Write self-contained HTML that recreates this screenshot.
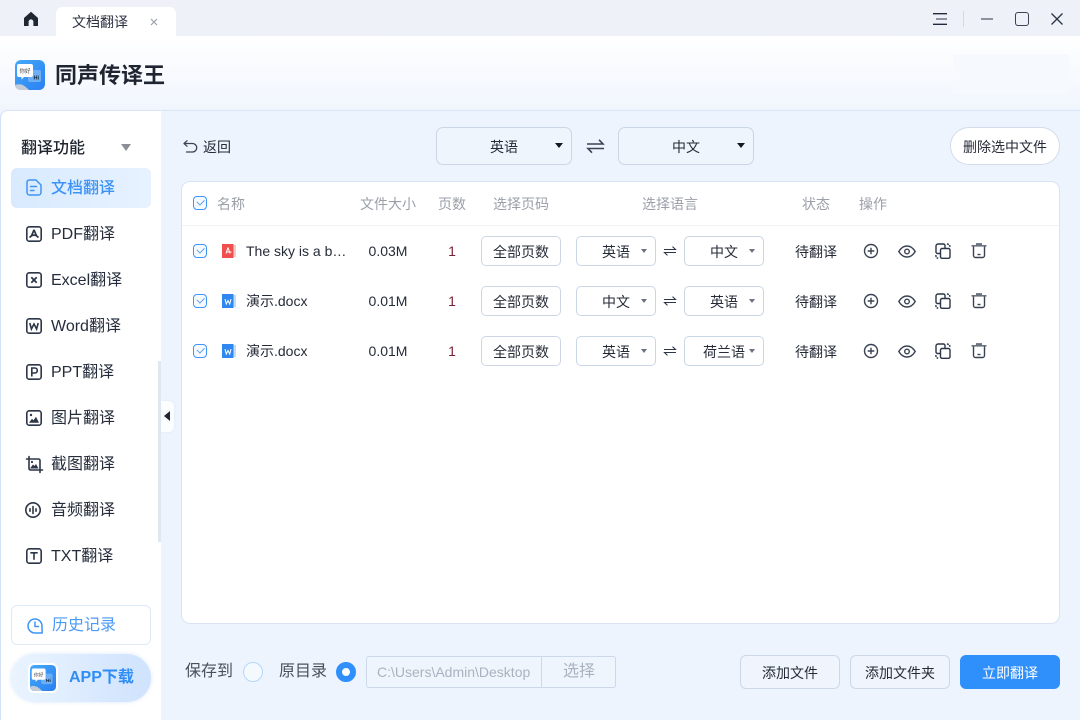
<!DOCTYPE html>
<html lang="zh-CN">
<head>
<meta charset="utf-8">
<title>同声传译王</title>
<style>
*{box-sizing:border-box;margin:0;padding:0}
html,body{width:1080px;height:720px;overflow:hidden;background:#edf4fd}
body{position:relative;font-family:"Liberation Sans","Noto Sans CJK SC",sans-serif;color:#1f2937;font-size:14px}
.a{position:absolute;white-space:nowrap}
.c{text-align:center}
svg{position:absolute;display:block;overflow:visible}
.side{font-size:16px;left:51px;line-height:24px;color:#252d3c}
.h{font-size:14px;color:#9a9fa8;line-height:20px;top:194px}
.t{font-size:14px;line-height:20px;color:#252b37}
.sel{position:absolute;border:1px solid #c9d6e6;border-radius:5px;background:#fff;width:80px;height:30px;font-size:14px;line-height:30px;color:#252b37}
.sel b{position:absolute;font-weight:normal;left:-1px;width:80px;text-align:center;top:0}
.sel i{position:absolute;right:8px;top:12px;width:0;height:0;border-left:3.5px solid transparent;border-right:3.5px solid transparent;border-top:4.5px solid #6b7280}
.pg{position:absolute;left:481px;width:80px;height:30px;border:1px solid #ccd6e4;border-radius:5px;background:#fff;text-align:center;font-size:14px;line-height:30px;color:#252b37}
.btn{position:absolute;top:655px;height:34px;border:1px solid #ccd8e8;border-radius:6px;background:#f0f5fd;text-align:center;font-size:14px;line-height:35px;color:#252b37}
.ic{fill:none;stroke:#2c3648;stroke-width:1.6;stroke-linecap:round;stroke-linejoin:round}
.cb{position:absolute;left:193px;width:14px;height:14px;border:1.5px solid #3f95f6;border-radius:4px;background:#f6faff}
.cb:after{content:"";position:absolute;left:2.5px;top:1.6px;width:6px;height:3.6px;border-left:1.2px solid #5e9fe6;border-bottom:1.2px solid #5e9fe6;transform:rotate(-45deg)}
</style>
</head>
<body>
<!-- title bar -->
<div class="a" style="left:0;top:0;width:1080px;height:36px;background:#eef1f7"></div>
<svg style="left:23px;top:11px" width="16" height="16" viewBox="0 0 16 16"><path fill="#1f2733" d="M8 .8 15 7v8h-4.6v-4.2a2.4 2.4 0 0 0-4.8 0V15H1V7z"/></svg>
<div class="a" style="left:56px;top:7px;width:120px;height:29px;background:#fff;border-radius:7px 7px 0 0"></div>
<div class="a" style="left:72px;top:12px;font-size:14px;line-height:20px;color:#2b3240">文档翻译</div>
<svg style="left:150px;top:18px" width="8" height="8" viewBox="0 0 8 8"><path d="M1 1l6 6M7 1 1 7" stroke="#9aa0aa" stroke-width="1.2"/></svg>
<svg style="left:933px;top:13px" width="14" height="12" viewBox="0 0 14 12"><path d="M0 .7h14M0 11.3h14" stroke="#1f2a3c" stroke-width="1.3"/><path d="M3 6h11" stroke="#8d94a0" stroke-width="2"/></svg>
<div class="a" style="left:963px;top:11px;width:1px;height:16px;background:#d5d9e0"></div>
<div class="a" style="left:981px;top:18px;width:12px;height:2px;background:#8c919b"></div>
<div class="a" style="left:1015px;top:12px;width:14px;height:14px;border:1.7px solid #3a4353;border-radius:3px"></div>
<svg style="left:1051px;top:13px" width="12" height="12" viewBox="0 0 12 12"><path d="M.5.5l11 11M11.500.5l-11 11" stroke="#2b3444" stroke-width="1.3"/></svg>

<!-- header -->
<div class="a" style="left:0;top:36px;width:1080px;height:76px;background:linear-gradient(#fff,#f0f5fd)"></div>
<div class="a" style="left:953px;top:54px;width:116px;height:40px;background:#f6fafe"></div>
<svg style="left:15px;top:60px" width="30" height="30" viewBox="0 0 30 30">
<defs><linearGradient id="lg" x1="0" y1="0" x2="1" y2="1"><stop offset="0" stop-color="#45a9f8"/><stop offset="1" stop-color="#2a80f2"/></linearGradient></defs>
<rect width="30" height="30" rx="6" fill="url(#lg)"/>
<path d="M0 25c6-2 9 0 14 5H5a5 5 0 0 1-5-5z" fill="#c3ccd6"/>
<rect x="13" y="10" width="13" height="12" rx="2" fill="#6eaef5"/>
<path d="M4 4h12a2 2 0 0 1 2 2v9a2 2 0 0 1-2 2H9l-2.500 2.500V17H4a2 2 0 0 1-2-2V6a2 2 0 0 1 2-2z" fill="#fff"/>
<text x="4.500" y="13" font-size="5.500" fill="#444" font-family="Noto Sans CJK SC">你好</text>
<text x="18.500" y="19.500" font-size="5.500" fill="#123" font-weight="bold" font-family="Liberation Sans">Hi</text>
</svg>
<div class="a" style="left:55px;top:59px;font-size:22px;line-height:33px;font-weight:700;color:#1e2430">同声传译王</div>

<!-- main bg / sidebar -->
<div class="a" style="left:0;top:110px;width:1080px;height:610px;background:#edf4fd;border-top:1px solid #d8e5f5;border-radius:8px 0 0 0"></div>
<div class="a" style="left:0;top:110px;width:161px;height:610px;background:#fff;border-top:1px solid #d8e5f5;border-left:1px solid #d3e2f6;border-radius:8px 0 0 0"></div>

<div class="a" style="left:21px;top:137px;font-size:16px;line-height:24px;font-weight:500;color:#1f2530">翻译功能</div>
<div class="a" style="left:121px;top:144px;width:0;height:0;border-left:5px solid transparent;border-right:5px solid transparent;border-top:7px solid #8b9098"></div>

<div class="a" style="left:11px;top:168px;width:140px;height:40px;border-radius:6px;background:linear-gradient(90deg,#d9eaff,#e6f2ff)"></div>
<svg style="left:26px;top:179px" width="16" height="17" viewBox="0 0 16 17" fill="none" stroke="#3e95f5" stroke-width="1.500" stroke-linecap="round" stroke-linejoin="round"><path d="M3 1h7l5 5v7.500a2.500 2.500 0 0 1-2.500 2.500h-9A2.500 2.500 0 0 1 1 13.500v-10A2.500 2.500 0 0 1 3 1z"/><path d="M4.500 7.500h6M4.500 11.500h3.500"/></svg>
<div class="a side" style="top:177px;color:#3d93f5;font-weight:500">文档翻译</div>

<svg style="left:26px;top:226px" width="16" height="16" viewBox="0 0 16 16"><rect class="ic" x=".8" y=".8" width="14.400" height="14.400" rx="2.500"/><path d="M8 3.800 5.500 9.800l-2 1.700M8 3.800l2.500 6 2 1.700M5.300 9.800c2-1 3.400-1 5.400 0" fill="none" stroke="#2c3648" stroke-width="1.700"/></svg>
<div class="a side" style="top:223px">PDF翻译</div>

<svg style="left:26px;top:272px" width="16" height="16" viewBox="0 0 16 16"><rect class="ic" x=".8" y=".8" width="14.400" height="14.400" rx="2.500"/><path d="M5.300 5.300l5.400 5.400M10.700 5.300l-5.400 5.400" stroke="#2c3648" stroke-width="1.800"/></svg>
<div class="a side" style="top:269px">Excel翻译</div>

<svg style="left:26px;top:318px" width="16" height="16" viewBox="0 0 16 16"><rect class="ic" x=".8" y=".8" width="14.400" height="14.400" rx="2.500"/><path d="M3.800 5l1.600 6L8 6l2.600 5 1.600-6" fill="none" stroke="#2c3648" stroke-width="1.600"/></svg>
<div class="a side" style="top:315px">Word翻译</div>

<svg style="left:26px;top:364px" width="16" height="16" viewBox="0 0 16 16"><rect class="ic" x=".8" y=".8" width="14.400" height="14.400" rx="2.500"/><path d="M5.800 12.500v-8.500h3a2.400 2.400 0 0 1 0 5h-3" fill="none" stroke="#2c3648" stroke-width="1.600"/></svg>
<div class="a side" style="top:361px">PPT翻译</div>

<svg style="left:26px;top:410px" width="16" height="16" viewBox="0 0 16 16"><rect class="ic" x=".8" y=".8" width="14.400" height="14.400" rx="2.500"/><circle cx="5" cy="5" r="1.200" fill="#2c3648"/><path d="M3 12.800l3-4 1.500 1.600L10 6.800l3 6z" fill="#2c3648"/></svg>
<div class="a side" style="top:407px">图片翻译</div>

<svg style="left:26px;top:456px" width="17" height="17" viewBox="0 0 17 17"><path class="ic" d="M3 .5v12a1.500 1.500 0 0 0 1.500 1.500H16.500M.5 3h12a1.500 1.500 0 0 1 1.500 1.500V16.500"/><circle cx="6" cy="6" r="1.100" fill="#2c3648"/><path d="M4 12.500l3-4 1.500 1.500L10 8l2.500 4.500z" fill="#2c3648"/></svg>
<div class="a side" style="top:453px">截图翻译</div>

<svg style="left:25px;top:502px" width="16" height="16" viewBox="0 0 16 16"><circle class="ic" cx="8" cy="8" r="7.200"/><path d="M5 6.800v2.400M8 4.500v7M11 6.800v2.400" stroke="#2c3648" stroke-width="1.600" stroke-linecap="round"/></svg>
<div class="a side" style="top:499px">音频翻译</div>

<svg style="left:26px;top:548px" width="16" height="16" viewBox="0 0 16 16"><rect class="ic" x=".8" y=".8" width="14.400" height="14.400" rx="2.500"/><path d="M4.300 4.800h7.400M8 4.800v7" stroke="#2c3648" stroke-width="1.600"/></svg>
<div class="a side" style="top:545px">TXT翻译</div>

<!-- scrollbar & collapse -->
<div class="a" style="left:158px;top:361px;width:3px;height:181px;background:#dfe7f3"></div>
<div class="a" style="left:161px;top:401px;width:13px;height:31px;background:#fbfdff;border-radius:0 5px 5px 0;box-shadow:0 0 2px #dde6f2"></div>
<div class="a" style="left:164px;top:411px;width:0;height:0;border-top:5px solid transparent;border-bottom:5px solid transparent;border-right:6px solid #1f2733"></div>

<!-- history -->
<div class="a" style="left:11px;top:605px;width:140px;height:40px;border:1px solid #deeaf8;border-radius:6px;background:#fff"></div>
<svg style="left:27px;top:618px" width="16" height="16" viewBox="0 0 16 16" fill="none" stroke="#3e95f5" stroke-width="1.500" stroke-linecap="round" stroke-linejoin="round"><path d="M15.200 15H8a7 7 0 1 1 7-7c0 3 0 5 .2 7z"/><path d="M8 4v4.500h3.500"/></svg>
<div class="a" style="left:52px;top:614px;font-size:16px;line-height:24px;color:#4a9af6">历史记录</div>

<!-- app download -->
<div class="a" style="left:11px;top:654px;width:140px;height:48px;border-radius:24px;background:linear-gradient(90deg,#eaf4ff,#cfe3fd);box-shadow:0 0 5px #dceafb"></div>
<div class="a" style="left:28px;top:663px;width:30px;height:30px;background:#fff;border-radius:6px"></div>
<svg style="left:30px;top:665px" width="26" height="26" viewBox="0 0 30 30">
<rect width="30" height="30" rx="5" fill="url(#lg)"/>
<path d="M0 25c6-2 9 0 14 5H5a5 5 0 0 1-5-5z" fill="#c3ccd6"/>
<rect x="13" y="10" width="13" height="12" rx="2" fill="#6eaef5"/>
<path d="M4 4h12a2 2 0 0 1 2 2v9a2 2 0 0 1-2 2H9l-2.500 2.500V17H4a2 2 0 0 1-2-2V6a2 2 0 0 1 2-2z" fill="#fff"/>
<text x="4.500" y="13" font-size="5.500" fill="#444" font-family="Noto Sans CJK SC">你好</text>
<text x="18.500" y="19.500" font-size="5.500" fill="#123" font-weight="bold" font-family="Liberation Sans">Hi</text>
</svg>
<div class="a" style="left:69px;top:666px;font-size:16px;line-height:24px;font-weight:700;color:#2f8df5">APP下载</div>

<!-- top toolbar -->
<svg style="left:183px;top:140px" width="15" height="13" viewBox="0 0 15 13" fill="none" stroke="#3b4454" stroke-width="1.300" stroke-linecap="round" stroke-linejoin="round"><path d="M4 .8 1 3.500l3 2.700"/><path d="M1.200 3.500H9.500a4 4 0 0 1 0 8.500H3.500"/></svg>
<div class="a" style="left:203px;top:137px;font-size:14px;line-height:20px;color:#252b37">返回</div>

<div class="a" style="left:436px;top:127px;width:136px;height:38px;border:1px solid #cad6e6;border-radius:7px;background:#eff5fd"></div>
<div class="a c" style="left:436px;top:137px;width:136px;font-size:14px;line-height:20px;color:#252b37">英语</div>
<div class="a" style="left:555px;top:143px;width:0;height:0;border-left:4px solid transparent;border-right:4px solid transparent;border-top:5px solid #15191f"></div>
<svg style="left:587px;top:139px" width="17" height="14" viewBox="0 0 17 14" fill="none" stroke="#3a4353" stroke-width="1.600"><path d="M0 5h16L12 .8M17 9.500H1L5 13.700"/></svg>
<div class="a" style="left:618px;top:127px;width:136px;height:38px;border:1px solid #cad6e6;border-radius:7px;background:#eff5fd"></div>
<div class="a c" style="left:618px;top:137px;width:136px;font-size:14px;line-height:20px;color:#252b37">中文</div>
<div class="a" style="left:737px;top:143px;width:0;height:0;border-left:4px solid transparent;border-right:4px solid transparent;border-top:5px solid #15191f"></div>

<div class="a c" style="left:950px;top:127px;width:110px;height:38px;border:1px solid #d2dcea;border-radius:19px;background:#fff;font-size:14px;line-height:38px;color:#252b37">删除选中文件</div>

<!-- table -->
<div class="a" style="left:181px;top:181px;width:879px;height:443px;background:#fff;border:1px solid #d8e4f4;border-radius:9px"></div>
<div class="a" style="left:182px;top:225px;width:877px;height:1px;background:#f0f2f5"></div>
<div class="cb" style="top:196px"></div>
<div class="a h" style="left:217px">名称</div>
<div class="a h" style="left:360px">文件大小</div>
<div class="a h" style="left:438px">页数</div>
<div class="a h" style="left:493px">选择页码</div>
<div class="a h" style="left:642px">选择语言</div>
<div class="a h" style="left:802px">状态</div>
<div class="a h" style="left:859px">操作</div>

<!-- row 1 -->
<div class="cb" style="top:244px"></div>
<svg style="left:222px;top:244px" width="14" height="14" viewBox="0 0 14 14"><rect x="11" y="1" width="3" height="12" fill="#f5cccc"/><path d="M0 0h11.500v14H0z" fill="#f04f4f"/><path d="M6 3.500 4 9.500M6 3.500 8 9.500M4.500 8h5" stroke="#fff" stroke-width="1" fill="none"/></svg>
<div class="a t" style="left:246px;top:241px">The sky is a b…</div>
<div class="a t c" style="left:358px;top:241px;width:60px">0.03M</div>
<div class="a t c" style="left:442px;top:241px;width:20px;color:#7a1f35">1</div>
<div class="pg" style="top:236px">全部页数</div>
<div class="sel" style="left:576px;top:236px"><b>英语</b><i></i></div>
<svg style="left:664px;top:246px" width="12" height="10" viewBox="0 0 12 10" fill="none" stroke="#2c3648" stroke-width="1.100"><path d="M0 3.500h11.500L8.500.6M12 6.500H.5l3 2.900"/></svg>
<div class="sel" style="left:684px;top:236px"><b>中文</b><i></i></div>
<div class="a t c" style="left:786px;top:242px;width:60px">待翻译</div>

<!-- row 2 -->
<div class="cb" style="top:294px"></div>
<svg style="left:222px;top:294px" width="14" height="14" viewBox="0 0 14 14"><rect x="11" y="1" width="3" height="12" fill="#c6dcfa"/><path d="M0 0h11.500v14H0z" fill="#2f88f0"/><path d="M3 5l1.300 5L6 6.500 7.700 10 9 5" stroke="#fff" stroke-width="1" fill="none"/></svg>
<div class="a t" style="left:246px;top:291px">演示.docx</div>
<div class="a t c" style="left:358px;top:291px;width:60px">0.01M</div>
<div class="a t c" style="left:442px;top:291px;width:20px;color:#7a1f35">1</div>
<div class="pg" style="top:286px">全部页数</div>
<div class="sel" style="left:576px;top:286px"><b>中文</b><i></i></div>
<svg style="left:664px;top:296px" width="12" height="10" viewBox="0 0 12 10" fill="none" stroke="#2c3648" stroke-width="1.100"><path d="M0 3.500h11.500L8.500.6M12 6.500H.5l3 2.900"/></svg>
<div class="sel" style="left:684px;top:286px"><b>英语</b><i></i></div>
<div class="a t c" style="left:786px;top:292px;width:60px">待翻译</div>

<!-- row 3 -->
<div class="cb" style="top:344px"></div>
<svg style="left:222px;top:344px" width="14" height="14" viewBox="0 0 14 14"><rect x="11" y="1" width="3" height="12" fill="#c6dcfa"/><path d="M0 0h11.500v14H0z" fill="#2f88f0"/><path d="M3 5l1.300 5L6 6.500 7.700 10 9 5" stroke="#fff" stroke-width="1" fill="none"/></svg>
<div class="a t" style="left:246px;top:341px">演示.docx</div>
<div class="a t c" style="left:358px;top:341px;width:60px">0.01M</div>
<div class="a t c" style="left:442px;top:341px;width:20px;color:#7a1f35">1</div>
<div class="pg" style="top:336px">全部页数</div>
<div class="sel" style="left:576px;top:336px"><b>英语</b><i></i></div>
<svg style="left:664px;top:346px" width="12" height="10" viewBox="0 0 12 10" fill="none" stroke="#2c3648" stroke-width="1.100"><path d="M0 3.500h11.500L8.500.6M12 6.500H.5l3 2.900"/></svg>
<div class="sel" style="left:684px;top:336px"><b>荷兰语</b><i></i></div>
<div class="a t c" style="left:786px;top:342px;width:60px">待翻译</div>

<!-- action icons -->
<svg style="left:863px;top:243px" width="16" height="16" viewBox="0 0 16 16"><circle cx="8" cy="8" r="6.500" fill="none" stroke="#3a4353" stroke-width="1.400"/><path d="M8 4.700v6.600M4.700 8h6.600" stroke="#3a4353" stroke-width="1.400"/></svg>
<svg style="left:863px;top:293px" width="16" height="16" viewBox="0 0 16 16"><circle cx="8" cy="8" r="6.500" fill="none" stroke="#3a4353" stroke-width="1.400"/><path d="M8 4.700v6.600M4.700 8h6.600" stroke="#3a4353" stroke-width="1.400"/></svg>
<svg style="left:863px;top:343px" width="16" height="16" viewBox="0 0 16 16"><circle cx="8" cy="8" r="6.500" fill="none" stroke="#3a4353" stroke-width="1.400"/><path d="M8 4.700v6.600M4.700 8h6.600" stroke="#3a4353" stroke-width="1.400"/></svg>

<svg style="left:898px;top:245px" width="18" height="13" viewBox="0 0 18 13" fill="none" stroke="#3a4353" stroke-width="1.400"><path d="M.8 6.500C3 2.800 5.800 1 9 1s6 1.800 8.200 5.500C15 10.200 12.200 12 9 12S3 10.200.8 6.500z"/><circle cx="9" cy="6.500" r="2.300"/></svg>
<svg style="left:898px;top:295px" width="18" height="13" viewBox="0 0 18 13" fill="none" stroke="#3a4353" stroke-width="1.400"><path d="M.8 6.500C3 2.800 5.800 1 9 1s6 1.800 8.200 5.500C15 10.200 12.200 12 9 12S3 10.200.8 6.500z"/><circle cx="9" cy="6.500" r="2.300"/></svg>
<svg style="left:898px;top:345px" width="18" height="13" viewBox="0 0 18 13" fill="none" stroke="#3a4353" stroke-width="1.400"><path d="M.8 6.500C3 2.800 5.800 1 9 1s6 1.800 8.200 5.500C15 10.200 12.200 12 9 12S3 10.200.8 6.500z"/><circle cx="9" cy="6.500" r="2.300"/></svg>

<svg style="left:935px;top:243px" width="16" height="16" viewBox="0 0 16 16" fill="none" stroke="#2c3648" stroke-width="1.400"><rect x="5.500" y="5.500" width="9.500" height="9.800" rx="1.500"/><path d="M5.500 10.500H2.500A1.500 1.500 0 0 1 1 9V3a2 2 0 0 1 2-2h5.500A1.500 1.500 0 0 1 10 2.500V5.500"/><path d="M12 .8l2.500 1 .5 2M.8 12l.4 2.500 2 .8" stroke-dasharray="2 1"/></svg>
<svg style="left:935px;top:293px" width="16" height="16" viewBox="0 0 16 16" fill="none" stroke="#2c3648" stroke-width="1.400"><rect x="5.500" y="5.500" width="9.500" height="9.800" rx="1.500"/><path d="M5.500 10.500H2.500A1.500 1.500 0 0 1 1 9V3a2 2 0 0 1 2-2h5.500A1.500 1.500 0 0 1 10 2.500V5.500"/><path d="M12 .8l2.500 1 .5 2M.8 12l.4 2.500 2 .8" stroke-dasharray="2 1"/></svg>
<svg style="left:935px;top:343px" width="16" height="16" viewBox="0 0 16 16" fill="none" stroke="#2c3648" stroke-width="1.400"><rect x="5.500" y="5.500" width="9.500" height="9.800" rx="1.500"/><path d="M5.500 10.500H2.500A1.500 1.500 0 0 1 1 9V3a2 2 0 0 1 2-2h5.500A1.500 1.500 0 0 1 10 2.500V5.500"/><path d="M12 .8l2.500 1 .5 2M.8 12l.4 2.500 2 .8" stroke-dasharray="2 1"/></svg>

<svg style="left:971px;top:243px" width="16" height="15" viewBox="0 0 16 15" fill="none" stroke="#3a4353" stroke-width="1.400"><path d="M.5 2.800h15" stroke="#6b7280" stroke-width="1.600"/><path d="M5 1.200h6" stroke="#6b7280" stroke-width="2.200"/><path d="M2.500 3.500v9A2 2 0 0 0 4.500 14.500h7a2 2 0 0 0 2-2v-9"/><path d="M6.500 11.500h3"/></svg>
<svg style="left:971px;top:293px" width="16" height="15" viewBox="0 0 16 15" fill="none" stroke="#3a4353" stroke-width="1.400"><path d="M.5 2.800h15" stroke="#6b7280" stroke-width="1.600"/><path d="M5 1.200h6" stroke="#6b7280" stroke-width="2.200"/><path d="M2.500 3.500v9A2 2 0 0 0 4.500 14.500h7a2 2 0 0 0 2-2v-9"/><path d="M6.500 11.500h3"/></svg>
<svg style="left:971px;top:343px" width="16" height="15" viewBox="0 0 16 15" fill="none" stroke="#3a4353" stroke-width="1.400"><path d="M.5 2.800h15" stroke="#6b7280" stroke-width="1.600"/><path d="M5 1.200h6" stroke="#6b7280" stroke-width="2.200"/><path d="M2.500 3.500v9A2 2 0 0 0 4.500 14.500h7a2 2 0 0 0 2-2v-9"/><path d="M6.500 11.500h3"/></svg>

<!-- bottom bar -->
<div class="a" style="left:185px;top:661px;font-size:16px;line-height:22px;color:#4a505a">保存到</div>
<div class="a" style="left:243px;top:662px;width:20px;height:20px;border:1px solid #b5d7f8;border-radius:50%;background:#f4f9fe"></div>
<div class="a" style="left:279px;top:661px;font-size:16px;line-height:22px;color:#4a505a">原目录</div>
<div class="a" style="left:336px;top:662px;width:20px;height:20px;border:6px solid #2f8ffb;border-radius:50%;background:#fff"></div>
<div class="a" style="left:366px;top:656px;width:250px;height:32px;border:1px solid #cdd9e8;border-radius:3px;background:#eff5fd"></div>
<div class="a" style="left:541px;top:657px;width:1px;height:30px;background:#cdd9e8"></div>
<div class="a" style="left:377px;top:662px;width:160px;font-size:14px;line-height:20px;color:#a9b3bf">C:\Users\Admin\Desktop</div>
<div class="a c" style="left:542px;top:661px;width:74px;font-size:16px;line-height:22px;color:#a9b3bf">选择</div>

<div class="btn" style="left:740px;width:100px">添加文件</div>
<div class="btn" style="left:850px;width:100px">添加文件夹</div>
<div class="btn" style="left:960px;width:100px;background:#2f8ffb;border-color:#2f8ffb;color:#fff">立即翻译</div>
</body>
</html>
